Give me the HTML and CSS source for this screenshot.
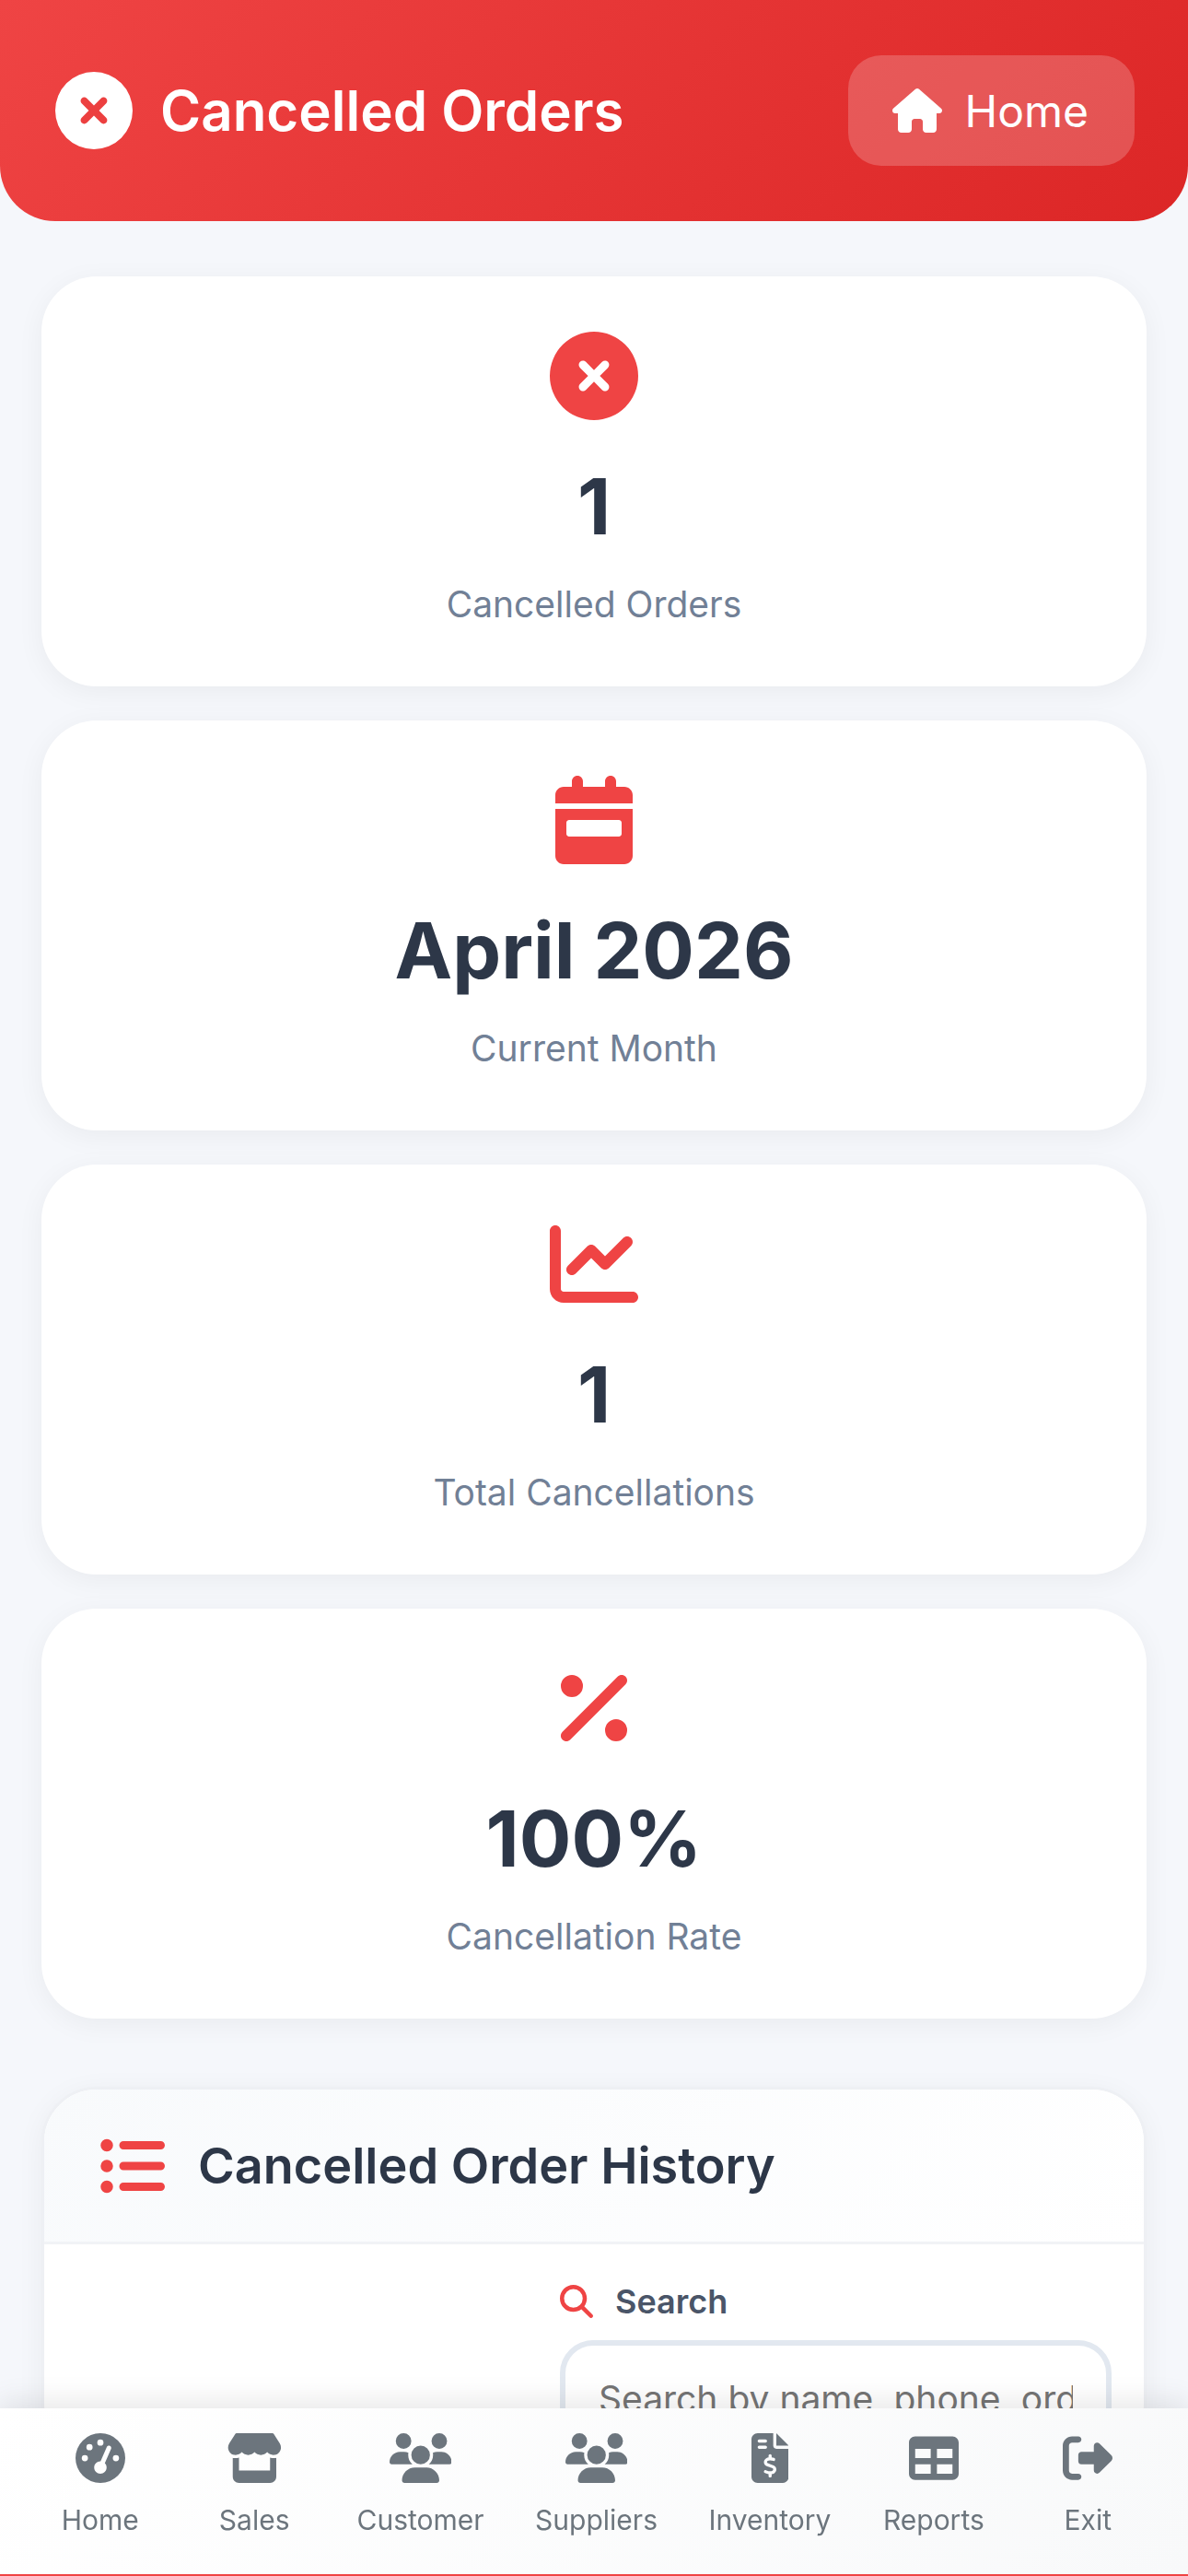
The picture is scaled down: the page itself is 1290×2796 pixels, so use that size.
FILE: index.html
```html
<!DOCTYPE html>
<html lang="en">
<head>
<meta charset="utf-8">
<title>Cancelled Orders</title>
<link rel="stylesheet" href="styles.css">
</head>
<body>
<header class="top">
  <div class="top-title">
    <svg class="top-icon" viewBox="0 0 512 512"><path d="M256 512A256 256 0 1 0 256 0a256 256 0 1 0 0 512zM175 175c9.4-9.4 24.6-9.4 33.9 0l47 47 47-47c9.4-9.4 24.6-9.4 33.9 0s9.4 24.6 0 33.9l-47 47 47 47c9.4 9.4 9.4 24.6 0 33.9s-24.6 9.4-33.9 0l-47-47-47 47c-9.4 9.4-24.6 9.4-33.9 0s-9.4-24.6 0-33.9l47-47-47-47c-9.4-9.4-9.4-24.6 0-33.9z"/></svg>
    <h1>Cancelled Orders</h1>
  </div>
  <a class="home-btn">
    <svg class="home-icon" viewBox="0 0 576 512"><path d="M575.8 255.5c0 18-15 32.1-32 32.1h-32l.7 160.2c0 2.7-.2 5.4-.5 8.1V472c0 22.1-17.9 40-40 40H456c-1.1 0-2.2 0-3.3-.1c-1.4 .1-2.8 .1-4.2 .1H416 392c-22.1 0-40-17.9-40-40V448 384c0-17.7-14.3-32-32-32H256c-17.7 0-32 14.3-32 32v64 24c0 22.1-17.9 40-40 40H160 128.1c-1.5 0-3-.1-4.5-.2c-1.2 .1-2.4 .2-3.6 .2H104c-22.1 0-40-17.9-40-40V360c0-.9 0-1.9 .1-2.8V287.6H32c-18 0-32-14-32-32.1c0-9 3-17 10-24L266.4 8c7-7 15-8 22-8s15 2 21 7L564.8 231.5c8 7 12 15 11 24z"/></svg>
    <span>Home</span>
  </a>
</header>

<main class="content">
  <section class="stats">
    <article class="stat">
      <svg class="stat-icon" viewBox="0 0 512 512"><path d="M256 512A256 256 0 1 0 256 0a256 256 0 1 0 0 512zM175 175c9.4-9.4 24.6-9.4 33.9 0l47 47 47-47c9.4-9.4 24.6-9.4 33.9 0s9.4 24.6 0 33.9l-47 47 47 47c9.4 9.4 9.4 24.6 0 33.9s-24.6 9.4-33.9 0l-47-47-47 47c-9.4 9.4-24.6 9.4-33.9 0s-9.4-24.6 0-33.9l47-47-47-47c-9.4-9.4-9.4-24.6 0-33.9z"/></svg>
      <div class="stat-value">1</div>
      <div class="stat-label">Cancelled Orders</div>
    </article>
    <article class="stat">
      <svg class="stat-icon" viewBox="0 0 448 512"><path d="M128 0c17.7 0 32 14.3 32 32V64H288V32c0-17.7 14.3-32 32-32s32 14.3 32 32V64h48c26.5 0 48 21.5 48 48v48H0V112C0 85.5 21.5 64 48 64H96V32c0-17.7 14.3-32 32-32zM0 192H448V464c0 26.5-21.5 48-48 48H48c-26.5 0-48-21.5-48-48V192zm80 64c-8.8 0-16 7.2-16 16v64c0 8.8 7.2 16 16 16H368c8.8 0 16-7.2 16-16V272c0-8.8-7.2-16-16-16H80z"/></svg>
      <div class="stat-value">April 2026</div>
      <div class="stat-label">Current Month</div>
    </article>
    <article class="stat">
      <svg class="stat-icon" viewBox="0 0 512 512"><path d="M64 64c0-17.7-14.3-32-32-32S0 46.3 0 64V400c0 44.2 35.8 80 80 80H480c17.7 0 32-14.3 32-32s-14.3-32-32-32H80c-8.8 0-16-7.2-16-16V64zm406.6 86.6c12.5-12.5 12.5-32.8 0-45.3s-32.8-12.5-45.3 0L320 210.7l-57.4-57.4c-12.5-12.5-32.8-12.5-45.3 0l-112 112c-12.5 12.5-12.5 32.8 0 45.3s32.8 12.5 45.3 0L240 221.3l57.4 57.4c12.5 12.5 32.8 12.5 45.3 0l128-128z"/></svg>
      <div class="stat-value">1</div>
      <div class="stat-label">Total Cancellations</div>
    </article>
    <article class="stat">
      <svg class="stat-icon" viewBox="0 0 384 512"><path d="M374.6 118.6c12.5-12.5 12.5-32.8 0-45.3s-32.8-12.5-45.3 0l-320 320c-12.5 12.5-12.5 32.8 0 45.3s32.8 12.5 45.3 0l320-320zM128 128A64 64 0 1 0 0 128a64 64 0 1 0 128 0zM384 384a64 64 0 1 0 -128 0 64 64 0 1 0 128 0z"/></svg>
      <div class="stat-value">100%</div>
      <div class="stat-label">Cancellation Rate</div>
    </article>
  </section>

  <section class="history">
    <div class="history-head">
      <svg class="history-icon" viewBox="0 0 512 512"><path d="M64 144a48 48 0 1 0 0-96 48 48 0 1 0 0 96zM192 64c-17.7 0-32 14.3-32 32s14.3 32 32 32H480c17.7 0 32-14.3 32-32s-14.3-32-32-32H192zm0 160c-17.7 0-32 14.3-32 32s14.3 32 32 32H480c17.7 0 32-14.3 32-32s-14.3-32-32-32H192zm0 160c-17.7 0-32 14.3-32 32s14.3 32 32 32H480c17.7 0 32-14.3 32-32s-14.3-32-32-32H192zM64 464a48 48 0 1 0 0-96 48 48 0 1 0 0 96zm48-208a48 48 0 1 0 -96 0 48 48 0 1 0 96 0z"/></svg>
      <h2>Cancelled Order History</h2>
    </div>
    <div class="history-body">
      <div class="search">
        <label class="search-label" for="q">
          <svg class="search-icon" viewBox="0 0 512 512"><path d="M416 208c0 45.9-14.9 88.3-40 122.7L502.6 457.4c12.5 12.5 12.5 32.8 0 45.3s-32.8 12.5-45.3 0L330.7 376c-34.4 25.2-76.8 40-122.7 40C93.1 416 0 322.9 0 208S93.1 0 208 0S416 93.1 416 208zM208 352a144 144 0 1 0 0-288 144 144 0 1 0 0 288z"/></svg>
          <span>Search</span>
        </label>
        <input id="q" class="search-box" type="text" placeholder="Search by name, phone, order...">
      </div>
    </div>
  </section>
</main>

<nav class="nav">
  <a class="nav-item">
    <svg class="nav-icon" viewBox="0 0 512 512"><path d="M0 256a256 256 0 1 1 512 0A256 256 0 1 1 0 256zM288 96a32 32 0 1 0 -64 0 32 32 0 1 0 64 0zM256 416c35.3 0 64-28.7 64-64c0-17.4-6.9-33.1-18.1-44.6L366 161.7c5.3-12.1-.2-26.3-12.3-31.6s-26.3 .2-31.6 12.3L257.9 288c-.6 0-1.3 0-1.9 0c-35.3 0-64 28.7-64 64s28.7 64 64 64zM176 144a32 32 0 1 0 -64 0 32 32 0 1 0 64 0zM96 288a32 32 0 1 0 0-64 32 32 0 1 0 0 64zm352-32a32 32 0 1 0 -64 0 32 32 0 1 0 64 0z"/></svg>
    <span>Home</span>
  </a>
  <a class="nav-item">
    <svg class="nav-icon" viewBox="0 0 576 512"><path d="M547.6 103.8L490.3 13.1C485.2 5 476.1 0 466.4 0H109.6C99.9 0 90.8 5 85.7 13.1L28.3 103.8c-29.6 46.8-3.4 111.9 51.9 119.4c4 .5 8.1 .8 12.1 .8c26.1 0 49.3-11.4 65.2-29c15.9 17.6 39.1 29 65.2 29c26.1 0 49.3-11.4 65.2-29c15.9 17.6 39.1 29 65.2 29c26.2 0 49.3-11.4 65.2-29c16 17.6 39.1 29 65.2 29c4.1 0 8.1-.3 12.1-.8c55.5-7.4 81.8-72.5 52.1-119.4zM499.7 254.9l-.1 0c-5.3 .7-10.7 1.1-16.2 1.1c-12.4 0-24.3-1.9-35.4-5.3V384H128V250.6c-11.2 3.5-23.2 5.4-35.6 5.4c-5.5 0-11-.4-16.3-1.1l-.1 0c-4.1-.6-8.1-1.3-12-2.3V384v64c0 35.3 28.7 64 64 64H448c35.3 0 64-28.7 64-64V384 252.6c-4 1-8 1.8-12.3 2.3z"/></svg>
    <span>Sales</span>
  </a>
  <a class="nav-item">
    <svg class="nav-icon" viewBox="0 0 640 512"><path d="M144 0a80 80 0 1 1 0 160A80 80 0 1 1 144 0zM512 0a80 80 0 1 1 0 160A80 80 0 1 1 512 0zM0 298.7C0 239.8 47.8 192 106.7 192h42.7c15.9 0 31 3.5 44.6 9.7c-1.3 7.2-1.9 14.7-1.9 22.3c0 38.2 16.8 72.5 43.3 96c-.2 0-.4 0-.7 0H21.3C9.6 320 0 310.4 0 298.7zM405.3 320c-.2 0-.4 0-.7 0c26.6-23.5 43.3-57.8 43.3-96c0-7.6-.7-15-1.9-22.3c13.6-6.3 28.7-9.7 44.6-9.7h42.7C592.2 192 640 239.8 640 298.7c0 11.8-9.6 21.3-21.3 21.3H405.3zM224 224a96 96 0 1 1 192 0 96 96 0 1 1 -192 0zM128 485.3C128 411.7 187.7 352 261.3 352H378.7C452.3 352 512 411.7 512 485.3c0 14.7-11.9 26.7-26.7 26.7H154.7c-14.7 0-26.7-11.9-26.7-26.7z"/></svg>
    <span>Customer</span>
  </a>
  <a class="nav-item">
    <svg class="nav-icon" viewBox="0 0 640 512"><path d="M144 0a80 80 0 1 1 0 160A80 80 0 1 1 144 0zM512 0a80 80 0 1 1 0 160A80 80 0 1 1 512 0zM0 298.7C0 239.8 47.8 192 106.7 192h42.7c15.9 0 31 3.5 44.6 9.7c-1.3 7.2-1.9 14.7-1.9 22.3c0 38.2 16.8 72.5 43.3 96c-.2 0-.4 0-.7 0H21.3C9.6 320 0 310.4 0 298.7zM405.3 320c-.2 0-.4 0-.7 0c26.6-23.5 43.3-57.8 43.3-96c0-7.6-.7-15-1.9-22.3c13.6-6.3 28.7-9.7 44.6-9.7h42.7C592.2 192 640 239.8 640 298.7c0 11.8-9.6 21.3-21.3 21.3H405.3zM224 224a96 96 0 1 1 192 0 96 96 0 1 1 -192 0zM128 485.3C128 411.7 187.7 352 261.3 352H378.7C452.3 352 512 411.7 512 485.3c0 14.7-11.9 26.7-26.7 26.7H154.7c-14.7 0-26.7-11.9-26.7-26.7z"/></svg>
    <span>Suppliers</span>
  </a>
  <a class="nav-item">
    <svg class="nav-icon" viewBox="0 0 384 512"><path d="M64 0C28.7 0 0 28.7 0 64V448c0 35.3 28.7 64 64 64H320c35.3 0 64-28.7 64-64V160H256c-17.7 0-32-14.3-32-32V0H64zM256 0V128H384L256 0zM64 80c0-8.8 7.2-16 16-16h64c8.8 0 16 7.2 16 16s-7.2 16-16 16H80c-8.8 0-16-7.2-16-16zm0 64c0-8.8 7.2-16 16-16h64c8.8 0 16 7.2 16 16s-7.2 16-16 16H80c-8.8 0-16-7.2-16-16zm128 72c8.8 0 16 7.2 16 16v17.3c8.5 1.2 16.7 3.1 24.1 5.1c8.5 2.3 13.6 11 11.3 19.6s-11 13.6-19.6 11.3c-11.1-3-22-5.2-32.1-5.3c-8.4-.1-17.4 1.8-23.6 5.5c-5.7 3.4-8.1 7.3-8.1 12.8c0 3.7 1.3 6.5 7.3 10.1c6.9 4.1 16.6 7.1 29.2 10.9l.5 .1 0 0 0 0c11.3 3.4 25.3 7.6 36.3 14.6c12.1 7.6 22.4 19.7 22.7 38.2c.3 19.3-9.6 33.3-22.9 41.6c-7.7 4.8-16.4 7.6-25.1 9.1V440c0 8.8-7.2 16-16 16s-16-7.2-16-16V422.2c-11.2-2.1-21.7-5.7-30.9-8.9l0 0c-2.1-.7-4.2-1.4-6.2-2.1c-8.4-2.8-12.9-11.9-10.1-20.2s11.9-12.9 20.2-10.1c2.5 .8 4.8 1.6 7.1 2.4l0 0 0 0 0 0c13.6 4.6 24.6 8.4 36.3 8.7c9.1 .3 17.9-1.7 23.7-5.3c5.1-3.2 7.9-7.3 7.8-14c-.1-4.6-1.8-7.8-7.7-11.6c-6.8-4.3-16.5-7.4-29-11.2l-1.6-.5 0 0c-11-3.3-24.3-7.3-34.8-13.7c-12-7.2-22.6-18.9-22.7-37.3c-.1-19.4 10.8-32.8 23.8-40.5c7.5-4.4 15.8-7.2 24.1-8.7V232c0-8.8 7.2-16 16-16z"/></svg>
    <span>Inventory</span>
  </a>
  <a class="nav-item">
    <svg class="nav-icon" viewBox="0 0 512 512"><path d="M64 256V160H224v96H64zm0 64H224v96H64V320zm224 96V320H448v96H288zM448 256H288V160H448v96zM64 32C28.7 32 0 60.7 0 96V416c0 35.3 28.7 64 64 64H448c35.3 0 64-28.7 64-64V96c0-35.3-28.7-64-64-64H64z"/></svg>
    <span>Reports</span>
  </a>
  <a class="nav-item">
    <svg class="nav-icon" viewBox="0 0 512 512"><path d="M377.9 105.9L500.7 228.7c7.2 7.2 11.3 17.1 11.3 27.3s-4.1 20.1-11.3 27.3L377.9 406.1c-6.4 6.4-15 9.9-24 9.9c-18.7 0-33.9-15.2-33.9-33.9l0-62.1-128 0c-17.7 0-32-14.3-32-32l0-64c0-17.7 14.3-32 32-32l128 0 0-62.1c0-18.7 15.2-33.9 33.9-33.9c9 0 17.6 3.6 24 9.9zM160 96L96 96c-17.7 0-32 14.3-32 32l0 256c0 17.7 14.3 32 32 32l64 0c17.7 0 32 14.3 32 32s-14.3 32-32 32l-64 0c-53 0-96-43-96-96L0 128C0 75 43 32 96 32l64 0c17.7 0 32 14.3 32 32s-14.3 32-32 32z"/></svg>
    <span>Exit</span>
  </a>
</nav>
</body>
</html>
```

FILE: styles.css
```css
* { box-sizing: border-box; }
html, body { margin: 0; padding: 0; }
body {
  height: 2796px;
  overflow: hidden;
  background: #f5f7fb;
  font-family: Inter, "Liberation Sans", sans-serif;
  color: #2d3748;
}
.top {
  height: 240px;
  padding: 0 58px 0 60px;
  display: flex;
  align-items: center;
  justify-content: space-between;
  background: linear-gradient(135deg, #ef4444, #dc2626);
  border-radius: 0 0 60px 60px;
  color: #fff;
}
.top-title { display: flex; align-items: center; gap: 30px; }
.top-icon { width: 84px; height: 84px; fill: #fff; }
h1 { margin: 0; font-size: 60px; font-weight: 600; line-height: 1.2; }
.home-btn {
  display: flex;
  align-items: center;
  gap: 25px;
  height: 120px;
  padding: 0 50px 0 48px;
  border-radius: 36px;
  background: rgba(255, 255, 255, .2);
  font-size: 48px;
}
.home-icon { width: 54px; height: 48px; fill: #fff; }
.content { padding: 60px 45px 0; }
.stats { display: flex; flex-direction: column; gap: 37px; }
.stat {
  height: 445px;
  padding-top: 60px;
  background: #fff;
  border-radius: 60px;
  box-shadow: 0 6px 30px rgba(0, 0, 0, .05);
  text-align: center;
}
.stat-icon { display: block; height: 96px; width: 96px; margin: 0 auto 44px; fill: #ef4444; }
.stat-value { font-size: 84px; font-weight: 700; line-height: 1.2; color: #2d3748; }
.stat-label { margin-top: 31px; font-size: 39px; color: #718096; }
.history {
  margin: 74px 0 0;
  background: #fff;
  border: 3px solid #eef0f4;
  border-radius: 60px;
  box-shadow: 0 6px 30px rgba(0, 0, 0, .05);
  overflow: hidden;
}
.history-head {
  height: 168px;
  padding: 0 60px 0 59px;
  display: flex;
  align-items: center;
  gap: 36px;
  background: linear-gradient(135deg, #f8fafc, #fff);
  border-bottom: 3px solid #f1f3f6;
}
.history-icon { width: 72px; height: 72px; fill: #ef4444; }
h2 { margin: 0; font-size: 54px; font-weight: 600; color: #2d3748; }
.history-body { display: flex; justify-content: flex-end; padding: 40px 35px 0; }
.search { width: 599px; }
.search-label { display: flex; align-items: center; gap: 24px; font-size: 36px; font-weight: 600; color: #4a5568; }
.search-icon { width: 36px; height: 36px; fill: #ef4444; }
.search-box {
  display: block;
  width: 100%;
  margin-top: 20px;
  height: 126px;
  padding: 0 36px;
  border: 6px solid #e2e8f0;
  border-radius: 36px;
  background: #fff;
  font-family: inherit;
  font-size: 39px;
  outline: none;
}
.search-box::placeholder { color: #757575; opacity: 1; }
.nav {
  position: fixed;
  left: 0;
  right: 0;
  bottom: 0;
  height: 182px;
  padding: 27px 25px 0 25px;
  display: flex;
  justify-content: space-around;
  background: linear-gradient(135deg, #fff, #f8f9fa);
  border-bottom: 2px solid #ef4444;
  box-shadow: 0 -6px 30px rgba(0, 0, 0, .1);
}
.nav-item { min-width: 112px; display: flex; flex-direction: column; align-items: center; gap: 22px; font-size: 30px; color: #6c757d; }
.nav-icon { height: 54px; fill: #6c757d; }
```
